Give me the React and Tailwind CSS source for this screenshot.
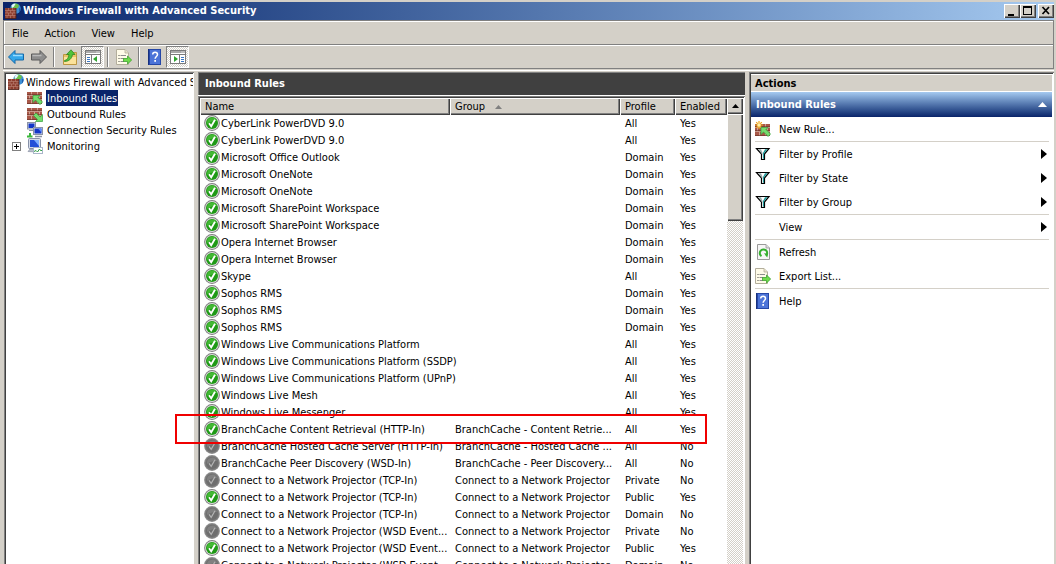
import React, { useState } from "react";

const SUNKEN = "p-0.5 shadow-[inset_1px_1px_0_#808080,inset_-1px_-1px_0_#fff,inset_2px_2px_0_#404040]";
const RAISED = "bg-[#d4d0c8] shadow-[inset_1px_1px_0_#fff,inset_-1px_-1px_0_#404040,inset_-2px_-2px_0_#808080]";
const DITHER = "bg-[repeating-conic-gradient(#fff_0_25%,#d4d0c8_0_50%)] bg-[length:2px_2px]";

const rules = [
  { name: "CyberLink PowerDVD 9.0", profile: "All", enabled: true },
  { name: "CyberLink PowerDVD 9.0", profile: "All", enabled: true },
  { name: "Microsoft Office Outlook", profile: "Domain", enabled: true },
  { name: "Microsoft OneNote", profile: "Domain", enabled: true },
  { name: "Microsoft OneNote", profile: "Domain", enabled: true },
  { name: "Microsoft SharePoint Workspace", profile: "Domain", enabled: true },
  { name: "Microsoft SharePoint Workspace", profile: "Domain", enabled: true },
  { name: "Opera Internet Browser", profile: "Domain", enabled: true },
  { name: "Opera Internet Browser", profile: "Domain", enabled: true },
  { name: "Skype", profile: "All", enabled: true },
  { name: "Sophos RMS", profile: "Domain", enabled: true },
  { name: "Sophos RMS", profile: "Domain", enabled: true },
  { name: "Sophos RMS", profile: "Domain", enabled: true },
  { name: "Windows Live Communications Platform", profile: "All", enabled: true },
  { name: "Windows Live Communications Platform (SSDP)", profile: "All", enabled: true },
  { name: "Windows Live Communications Platform (UPnP)", profile: "All", enabled: true },
  { name: "Windows Live Mesh", profile: "All", enabled: true },
  { name: "Windows Live Messenger", profile: "All", enabled: true },
  { name: "BranchCache Content Retrieval (HTTP-In)", group: "BranchCache - Content Retrie...", profile: "All", enabled: true },
  { name: "BranchCache Hosted Cache Server (HTTP-In)", group: "BranchCache - Hosted Cache ...", profile: "All", enabled: false },
  { name: "BranchCache Peer Discovery (WSD-In)", group: "BranchCache - Peer Discovery...", profile: "All", enabled: false },
  { name: "Connect to a Network Projector (TCP-In)", group: "Connect to a Network Projector", profile: "Private", enabled: false },
  { name: "Connect to a Network Projector (TCP-In)", group: "Connect to a Network Projector", profile: "Public", enabled: true },
  { name: "Connect to a Network Projector (TCP-In)", group: "Connect to a Network Projector", profile: "Domain", enabled: false },
  { name: "Connect to a Network Projector (WSD Event...", group: "Connect to a Network Projector", profile: "Private", enabled: false },
  { name: "Connect to a Network Projector (WSD Event...", group: "Connect to a Network Projector", profile: "Public", enabled: true },
  { name: "Connect to a Network Projector (WSD Event...", group: "Connect to a Network Projector", profile: "Domain", enabled: false },
];

function Svg({ children, className = "" }) {
  return (
    <svg viewBox="0 0 16 16" className={`block size-4 shrink-0 ${className}`} aria-hidden="true">
      {children}
    </svg>
  );
}

function Bricks({ y = 2, h = 12 }) {
  return (
    <g>
      <rect x="0" y={y} width="15" height={h} fill="#a85848" />
      <path
        d={`M0 ${y + 3}.5h15M0 ${y + 7}.5h15M4.5 ${y}v3.5M10.5 ${y}v3.5M2.5 ${y + 4}v3.5M7.5 ${y + 4}v3.5M12.5 ${y + 4}v3.5M4.5 ${y + 8}v${h - 8}M10.5 ${y + 8}v${h - 8}`}
        stroke="#d9b0a4"
        strokeWidth="0.8"
      />
      <path d={`M0 ${y + 2}.6h15M0 ${y + 6}.6h15M0 ${y + h - 0.5}h15`} stroke="#6b3428" strokeWidth="0.7" />
    </g>
  );
}

function FirewallIcon() {
  return (
    <Svg>
      <circle cx="10.5" cy="5.5" r="5.2" fill="#3d8fd6" />
      <path d="M9 .6c2-.5 4 .3 5 1.8l-1 2.600-2.500.8-1 2.200L7 6.500 6.500 3z" fill="#6cc04a" />
      <path d="M6.500 2.500C7.500 1 9 .6 10.500 1L9 3.500 7 5z" fill="#e6f5ff" />
      <path d="M14 5l1.600.5c0 1.500-.5 3-1.600 4z" fill="#1d5fae" />
      <rect x="0" y="5" width="11" height="10.500" fill="#8c3d2e" />
      <path d="M0 7.500h11M0 10h11M0 12.500h11M3.500 5v2.500M7.500 5v2.500M2 7.500V10M5.500 7.500V10M9 7.500V10M3.500 10v2.500M7.500 10v2.500M2 12.500v3M5.500 12.500v3M9 12.500v3" stroke="#c08878" strokeWidth="0.6" />
      <path d="M0 15.500h11V5" stroke="#4a2018" strokeWidth="0.8" fill="none" />
    </Svg>
  );
}

function InboundIcon() {
  return (
    <Svg>
      <Bricks />
      <path d="M6 5.500h7l-2 2 4.500 4.500-2.500 2.600L8.500 10l-2.500 2.500z" fill="#74dc6c" stroke="#35a03c" strokeWidth="0.7" />
    </Svg>
  );
}

function OutboundIcon() {
  return (
    <Svg>
      <Bricks />
      <path d="M15.500 15.500h-7l2-2L6.500 9.500 9 7l4.200 4 2.300-2.500z" fill="#74dc6c" stroke="#35a03c" strokeWidth="0.7" />
    </Svg>
  );
}

function NewRuleIcon() {
  return (
    <Svg>
      <Bricks y={3} />
      <path d="M4 0v8M0 4h8M1.200 1.200l5.600 5.600M6.800 1.200L1.200 6.800" stroke="#f2a516" strokeWidth="1.200" />
      <circle cx="4" cy="4" r="1.800" fill="#fff3a8" />
      <path d="M6 6.500h7l-2 2 4.500 4.500-2.300 2.500-4.700-4.500L6 13.500z" fill="#74dc6c" stroke="#35a03c" strokeWidth="0.7" />
    </Svg>
  );
}

function ConnectionIcon() {
  return (
    <Svg>
      <rect x="0.500" y="0.500" width="8" height="6.500" fill="#dfe3ea" stroke="#8b93a5" />
      <rect x="1.500" y="1.500" width="6" height="4.500" fill="#1336c8" />
      <path d="M2 8.500h5" stroke="#8b93a5" />
      <rect x="6.500" y="5.500" width="9" height="7" fill="#dfe3ea" stroke="#8b93a5" />
      <rect x="7.500" y="6.500" width="7" height="5" fill="#1336c8" />
      <path d="M11 6.500h3.500v4z" fill="#5d8cff" />
      <path d="M8 14.500h7" stroke="#8b93a5" strokeWidth="1.500" />
      <path d="M0 14.500h5.500M3 11v3" stroke="#3ab83a" strokeWidth="2" />
    </Svg>
  );
}

function MonitoringIcon() {
  return (
    <Svg>
      <rect x="1.500" y="0.500" width="12" height="10" rx="1" fill="#d5dbe8" stroke="#8791a8" />
      <rect x="3" y="2" width="9" height="7" fill="#2350d8" />
      <path d="M7 2h5v6z" fill="#7fb0ff" />
      <path d="M1 13.500l2-2.500h6v3z" fill="#b9c0cf" stroke="#7c8599" strokeWidth="0.600" />
      <rect x="6.500" y="9.500" width="9" height="6" fill="#fff" stroke="#a9b6c9" />
      <path d="M7 13.500l2-1 1.500 1.500 2-3 1 1.500H15" stroke="#2f9e44" fill="none" />
    </Svg>
  );
}

function StatusIcon({ enabled }) {
  return (
    <Svg>
      <circle cx="8" cy="8" r="7.900" fill={enabled ? "#7e7e7e" : "#8c8c8c"} />
      <circle cx="8" cy="8" r="6.900" fill={enabled ? "#dcdcdc" : "#7a7a7a"} />
      <circle cx="8" cy="8" r="6" fill={enabled ? "#1f9a16" : "#6e6e6e"} />
      <path d="M3 7a5.200 5.200 0 0 1 10-1C10 6 6 6.500 3 9z" fill={enabled ? "#43b934" : "#808080"} />
      <path d="M5 8.300l2.200 3L11 4.800" fill="none" stroke={enabled ? "#fff" : "#b4b4b4"} strokeWidth={enabled ? 1.8 : 1.2} />
    </Svg>
  );
}

function ArrowIcon({ forward }) {
  return (
    <Svg>
      <path
        d={forward ? "M15.500 8L9 1.500v3.500H.5v6H9v3.500z" : "M.5 8L7 1.500v3.500h8.500v6H7v3.500z"}
        fill={forward ? "#8d8d8d" : "#35a7ea"}
        stroke={forward ? "#5b5b5b" : "#1569a8"}
      />
      <path d={forward ? "M1.500 6.500h9" : "M5 6.500h9.500"} stroke={forward ? "#b9b9b9" : "#9bdcff"} strokeWidth="1.500" />
    </Svg>
  );
}

function FolderUpIcon() {
  return (
    <Svg>
      <path d="M1.500 5.500h6l1.500-2h5.500v12h-13z" fill="#e8c368" stroke="#b58a2c" strokeWidth="0.800" />
      <path d="M2 8h12v7H2z" fill="#fbe29a" />
      <path d="M2.500 11.500c2.500-.5 4-2.500 4.500-6H4.500L9 .8l4 4.700h-2.500c-.5 4-3.500 7-8 7z" fill="#4fc33a" stroke="#25811d" strokeWidth="0.700" />
    </Svg>
  );
}

function PaneIcon({ right }) {
  return (
    <Svg>
      <rect x="0.500" y="1.500" width="15" height="13" fill="#fff" stroke="#7b7b7b" />
      <path d="M1 3h14" stroke="#a8a8a8" strokeWidth="2" />
      <path d="M1 5.500h14" stroke="#7b7b7b" />
      <path d="M11.500 3h3" stroke="#fff" strokeDasharray="1 1" />
      {right ? (
        <g>
          <path d="M9.500 6v8" stroke="#7b7b7b" />
          <path d="M11 8.500h3M11 10.500h3M11 12.500h3" stroke="#3b78c4" />
          <path d="M4 7l4 3-4 3z" fill="#2fa32f" />
        </g>
      ) : (
        <g>
          <path d="M6.500 6v8" stroke="#7b7b7b" />
          <path d="M2 8.500h3M2 10.500h3M2 12.500h3" stroke="#3b78c4" />
          <path d="M12 7l-4 3 4 3z" fill="#2fa32f" />
        </g>
      )}
    </Svg>
  );
}

function ExportIcon() {
  return (
    <Svg>
      <path d="M.5.5h8.500l3.500 3.500v11.500H.5z" fill="#fffbe8" stroke="#b3ae9c" />
      <path d="M9 .5V4h3.500" fill="#e9e3c8" stroke="#b3ae9c" strokeWidth="0.800" />
      <path d="M2.500 6.500h1M2.500 9.500h1M2.500 12.500h1" stroke="#444" />
      <path d="M4.500 6.500H10M4.500 9.500H8M4.500 12.500H8" stroke="#8d8d8d" />
      <path d="M7.500 9.500h4V7l4.200 4-4.200 4v-2.500h-4z" fill="#6fdc4b" stroke="#2f9a24" strokeWidth="0.700" />
    </Svg>
  );
}

function HelpIcon() {
  return (
    <Svg>
      <rect x="1" y="0" width="13" height="16" fill="#2647a6" />
      <rect x="3" y="1" width="10" height="14" fill="#4c74d8" />
      <path d="M1.500 0v16" stroke="#18307e" />
      <path d="M5.700 5.500c0-3 4.800-3 4.800 0 0 2-2.400 2-2.400 4.300" fill="none" stroke="#fff" strokeWidth="1.500" />
      <rect x="7.300" y="11" width="1.700" height="1.800" fill="#fff" />
    </Svg>
  );
}

function RefreshIcon() {
  return (
    <Svg>
      <path d="M2.500.5h8.500l3.500 3.500v11.500h-12z" fill="#f6f6f6" stroke="#9a9a9a" />
      <path d="M11 .5V4h3.500" fill="#ddd" stroke="#9a9a9a" strokeWidth="0.800" />
      <path d="M6.500 12.200A3.700 3.700 0 1 1 11 11.800" fill="none" stroke="#35b02f" strokeWidth="2" />
      <path d="M9 9.300l4 .2-.7 4z" fill="#35b02f" />
    </Svg>
  );
}

function FilterIcon() {
  return (
    <Svg>
      <path d="M1.500 2.500h12.500L9.500 8v5.500h-3V8z" fill="#fff" stroke="#000" strokeWidth="1.200" />
      <path d="M10 3.200h2.500L9 7.500v5.300H8V7z" fill="#1f9a9a" />
      <path d="M3.500 3.200H6L7.500 7v2z" fill="#9aa" />
    </Svg>
  );
}

const actions = [
  { label: "New Rule...", icon: NewRuleIcon, divider: true },
  { label: "Filter by Profile", icon: FilterIcon, submenu: true },
  { label: "Filter by State", icon: FilterIcon, submenu: true },
  { label: "Filter by Group", icon: FilterIcon, submenu: true, divider: true },
  { label: "View", submenu: true, divider: true },
  { label: "Refresh", icon: RefreshIcon },
  { label: "Export List...", icon: ExportIcon, divider: true },
  { label: "Help", icon: HelpIcon },
];

const treeItems = [
  { label: "Inbound Rules", icon: InboundIcon },
  { label: "Outbound Rules", icon: OutboundIcon },
  { label: "Connection Security Rules", icon: ConnectionIcon },
  { label: "Monitoring", icon: MonitoringIcon, expandable: true },
];

function TitleBar() {
  return (
    <header className="flex h-[18px] items-center bg-linear-to-r from-[#0a246a] to-[#a6caf0] pl-0.5 text-white">
      <FirewallIcon />
      <h1 className="ml-0.5 flex-1 truncate font-bold">Windows Firewall with Advanced Security</h1>
      <button aria-label="Minimize" className={`h-3.5 w-4 ${RAISED}`}>
        <svg viewBox="0 0 16 14" className="block h-3.5 w-4"><path d="M4 10h6v2H4z" /></svg>
      </button>
      <button aria-label="Maximize" className={`h-3.5 w-4 ${RAISED}`}>
        <svg viewBox="0 0 16 14" className="block h-3.5 w-4"><path d="M3 2h9v9H3zM4 4v6h7V4z" fillRule="evenodd" /></svg>
      </button>
      <button aria-label="Close" className={`ml-0.5 h-3.5 w-4 ${RAISED}`}>
        <svg viewBox="0 0 16 14" className="block h-3.5 w-4"><path d="M4.500 3l6.500 7M11 3l-6.500 7" stroke="#000" strokeWidth="1.700" /></svg>
      </button>
    </header>
  );
}

function ToolButton({ label, pressed, children }) {
  return (
    <button
      aria-label={label}
      className={`flex h-[22px] w-[23px] items-center justify-center ${pressed ? `border border-t-[#808080] border-r-white border-b-white border-l-[#808080] ${DITHER}` : ""}`}
    >
      {children}
    </button>
  );
}

function Divider() {
  return <div className="mx-[3px] h-5 w-0.5 border-l border-[#808080] bg-white" />;
}

function Tree({ selected, onSelect }) {
  return (
    <nav className={`w-[190px] shrink-0 overflow-hidden bg-white leading-[18px] ${SUNKEN} pr-px`}>
      <div className="h-full overflow-hidden">
        <div className="flex h-4 items-start pl-0.5 whitespace-nowrap">
          <FirewallIcon />
          <span className="ml-0.5">Windows Firewall with Advanced S</span>
        </div>
        <ul>
          {treeItems.map((item) => {
            const Icon = item.icon;
            return (
              <li key={item.label} className="flex h-4 items-center whitespace-nowrap">
                <div className="w-[21px] pl-1.5">
                  {item.expandable && (
                    <button aria-label="Expand" className="block size-[9px] border border-[#808080] bg-white">
                      <svg viewBox="0 0 7 7" className="block size-[7px]"><path d="M1 3.500h5M3.500 1v5" stroke="#000" /></svg>
                    </button>
                  )}
                </div>
                <Icon />
                <button
                  onClick={() => onSelect(item.label)}
                  className={`ml-[3px] flex h-4 items-start px-px ${selected === item.label ? "bg-[#0a246a] text-white" : ""}`}
                >
                  {item.label}
                </button>
              </li>
            );
          })}
        </ul>
      </div>
    </nav>
  );
}

function RulesTable() {
  const th = `h-[17px] p-0 pt-px pl-[5px] text-left font-normal ${RAISED}`;
  return (
    <div className={`flex min-h-0 flex-1 bg-white ${SUNKEN}`}>
      <div className="min-w-0 flex-1 overflow-hidden">
        <table className="w-full table-fixed border-collapse whitespace-nowrap">
          <colgroup>
            <col className="w-[250px]" />
            <col />
            <col className="w-[55px]" />
            <col className="w-[52px]" />
          </colgroup>
          <thead>
            <tr>
              <th className={th}>Name</th>
              <th className={th}>
                Group
                <svg viewBox="0 0 7 4" className="ml-2.5 inline-block h-1 w-[7px] align-middle"><path d="M3.500 0L7 4H0z" fill="#808080" /></svg>
              </th>
              <th className={th}>Profile</th>
              <th className={th}>Enabled</th>
            </tr>
          </thead>
          <tbody>
            {rules.map((rule, i) => (
              <tr key={i}>
                <td className="p-0 pl-1">
                  <div className="flex h-[17px] items-start">
                    <StatusIcon enabled={rule.enabled} />
                    <span className="ml-px pt-px">{rule.name}</span>
                  </div>
                </td>
                <td className="p-0 pt-px pl-[5px]">{rule.group}</td>
                <td className="p-0 pt-px pl-[5px]">{rule.profile}</td>
                <td className="p-0 pt-px pl-[5px]">{rule.enabled ? "Yes" : "No"}</td>
              </tr>
            ))}
          </tbody>
        </table>
      </div>
      <div className={`flex w-4 shrink-0 flex-col ${DITHER}`}>
        <button aria-label="Scroll up" className={`flex h-4 items-center justify-center ${RAISED}`}>
          <svg viewBox="0 0 7 4" className="h-1 w-[7px]"><path d="M3.500 0L7 4H0z" /></svg>
        </button>
        <div className={`h-[107px] ${RAISED}`} />
      </div>
    </div>
  );
}

function ActionsPane({ title }) {
  return (
    <aside className={`w-[305px] shrink-0 overflow-hidden bg-white ${SUNKEN}`}>
      <h2 className="flex h-[17px] items-center border-t border-white bg-[#d4d0c8] pt-px pl-1 font-bold">Actions</h2>
      <div className="mt-px flex h-[25px] items-center justify-between bg-linear-to-b from-[#a6caf0] to-[#0a246a] pr-[5px] pl-[5px] font-bold text-white">
        {title}
        <svg viewBox="0 0 9 5" className="h-[5px] w-[9px]"><path d="M4.500 0L9 5H0z" fill="#fff" /></svg>
      </div>
      <ul className="pr-[3px] pl-1">
        {actions.map((item) => {
          const Icon = item.icon;
          return (
            <li key={item.label} className={item.divider ? "border-b border-[#d4d0c8]" : ""}>
              <button className="flex h-6 w-full items-center pr-0.5">
                <span className="w-6">{Icon && <Icon />}</span>
                <span className="flex-1 pt-0.5 text-left">{item.label}</span>
                {item.submenu && (
                  <svg viewBox="0 0 6 10" className="h-2.5 w-1.5"><path d="M0 0l6 5-6 5z" /></svg>
                )}
              </button>
            </li>
          );
        })}
      </ul>
    </aside>
  );
}

export default function App() {
  const [selected, setSelected] = useState("Inbound Rules");

  return (
    <div className="flex h-screen flex-col overflow-hidden bg-[#d4d0c8] px-[3px] pt-0.5 pr-0.5 font-['DejaVu_Sans_Condensed','DejaVu_Sans',sans-serif] text-[11px] leading-4 text-black">
      <TitleBar />

      <div className="border border-[#808080] shadow-[inset_1px_1px_0_#fff]">
        <div className="flex h-6 items-center border-b border-[#808080]">
          {["File", "Action", "View", "Help"].map((m) => (
            <button key={m} className="h-5 px-2 pt-0.5">{m}</button>
          ))}
        </div>
        <div className="flex h-[23px] items-center border-t border-white">
          <ToolButton label="Back"><ArrowIcon /></ToolButton>
          <ToolButton label="Forward"><ArrowIcon forward /></ToolButton>
          <Divider />
          <ToolButton label="Up one level"><FolderUpIcon /></ToolButton>
          <ToolButton label="Show console tree" pressed><PaneIcon /></ToolButton>
          <Divider />
          <ToolButton label="Export list"><ExportIcon /></ToolButton>
          <Divider />
          <ToolButton label="Help"><HelpIcon /></ToolButton>
          <ToolButton label="Show action pane" pressed><PaneIcon right /></ToolButton>
        </div>
      </div>

      <div className="mt-px -mb-0.5 flex min-h-0 flex-1 border-t border-white pt-px pl-px">
        <Tree selected={selected} onSelect={setSelected} />

        <main className="relative mx-1 flex min-w-0 flex-1 flex-col">
          <h2 className="flex h-[23px] shrink-0 items-center border-t border-l border-[#808080] bg-[#404040] pl-1.5 font-bold text-white">
            {selected}
          </h2>
          <div className="h-px shrink-0 bg-white" />
          <RulesTable />
          {/* callout round the BranchCache content rule */}
          <div className="pointer-events-none absolute top-[342px] right-[38px] -left-[23px] z-10 h-[30px] border-2 border-[#f00000]" />
        </main>

        <ActionsPane title={selected} />
      </div>
    </div>
  );
}
